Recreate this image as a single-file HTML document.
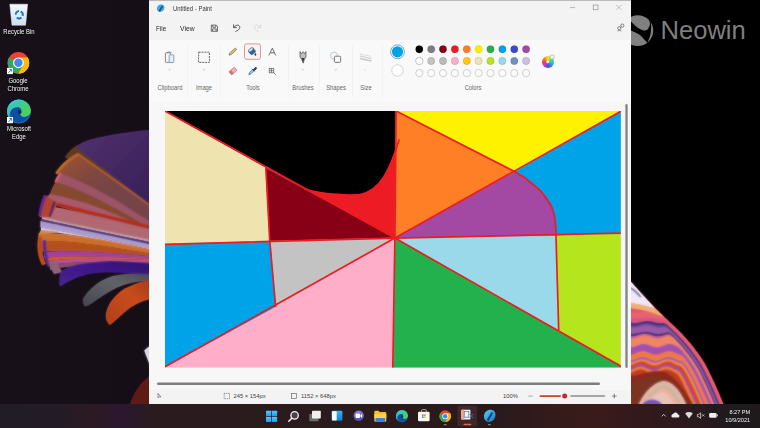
<!DOCTYPE html>
<html lang="en">
<head>
<meta charset="utf-8">
<title>Untitled - Paint</title>
<style>
html,body{margin:0;padding:0;}
body{width:760px;height:428px;overflow:hidden;background:#000;position:relative;font-family:"Liberation Sans",sans-serif;}
#wall{position:absolute;left:0;top:0;width:760px;height:428px;}
.dicon{position:absolute;color:#fff;font-size:6.5px;line-height:8.1px;text-align:center;width:40px;text-shadow:0 0 1px #000,0 1px 1px #000;transform:scaleX(0.91);transform-origin:50% 50%;}
#neowin{position:absolute;left:660.6px;top:15.4px;font-size:25.6px;line-height:30px;color:#7f7f7f;letter-spacing:-0.05px;}
#win{position:absolute;left:149px;top:0;width:482px;height:404px;background:#f3f3f3;overflow:hidden;}
#title{position:absolute;left:23.8px;top:3.5px;font-size:6.4px;line-height:10px;color:#383838;transform:scaleX(0.93);transform-origin:0 50%;white-space:nowrap;}
.menu{position:absolute;top:22.6px;font-size:7.1px;line-height:12px;color:#2a2a2a;transform-origin:0 50%;}
#ribbon{position:absolute;left:0;top:40px;width:482px;height:62px;background:#f9f9f9;border-bottom:1px solid #f4f4f5;}
.glabel{position:absolute;top:43px;font-size:6.3px;line-height:9px;color:#666;text-align:center;transform:translateX(-50%) scaleX(0.92);white-space:nowrap;}
.sep{position:absolute;top:4px;width:1px;height:54px;background:#f3f3f3;}
#work{position:absolute;left:0;top:102px;width:482px;height:289px;background:#f7f7f8;}
#status{position:absolute;left:0;top:390.3px;width:482px;height:14px;background:#f3f3f3;font-size:5.8px;line-height:12px;color:#444;}
#status span{position:absolute;top:0;white-space:nowrap;}
#task{position:absolute;left:0;top:404px;width:760px;height:24px;background:linear-gradient(90deg,#221c26 0%,#231c26 8%,#2b1a22 12%,#2a1730 16%,#2a1b1f 20%,#2a1b1d 35%,#2b1a1c 66%,#3a1b1a 78%,#33191c 84%,#291a1e 92%,#1f1a1d 96%,#1e1a1c 100%);}
#clock{position:absolute;right:9.6px;top:4.9px;font-size:5.9px;line-height:7.9px;color:#f2f2f2;text-align:right;transform:scaleX(0.95);transform-origin:100% 50%;}
svg{position:absolute;left:0;top:0;overflow:visible;}
</style>
</head>
<body>
<svg id="wall" width="760" height="428" viewBox="0 0 760 428">
  <defs>
    <filter id="soft" x="-5%" y="-5%" width="110%" height="110%"><feGaussianBlur stdDeviation="0.8"/></filter>
    <linearGradient id="bgL" x1="0" y1="0" x2="1" y2="0"><stop offset="0" stop-color="#181019"/><stop offset="1" stop-color="#150e17"/></linearGradient>
    <linearGradient id="pPurple" x1="0" y1="0" x2="1" y2="1"><stop offset="0" stop-color="#51316d"/><stop offset="1" stop-color="#372058"/></linearGradient>
    <linearGradient id="pBrown" gradientUnits="userSpaceOnUse" x1="70" y1="155" x2="100" y2="200"><stop offset="0" stop-color="#9a5232"/><stop offset="0.5" stop-color="#80483e"/><stop offset="1" stop-color="#74444a"/></linearGradient>
    <linearGradient id="pGray" x1="0" y1="1" x2="1" y2="0"><stop offset="0" stop-color="#46464e"/><stop offset="0.6" stop-color="#62626a"/><stop offset="1" stop-color="#4e4a58"/></linearGradient>
    <linearGradient id="pOrg" x1="0" y1="1" x2="1" y2="0"><stop offset="0" stop-color="#b0401a"/><stop offset="0.6" stop-color="#c84c1c"/><stop offset="1" stop-color="#a83c18"/></linearGradient>
    <linearGradient id="pVio" x1="0" y1="1" x2="1" y2="0"><stop offset="0" stop-color="#46288a"/><stop offset="0.5" stop-color="#40168c"/><stop offset="1" stop-color="#30126c"/></linearGradient>
    <linearGradient id="rimG" gradientUnits="userSpaceOnUse" x1="630" y1="284" x2="690" y2="350"><stop offset="0" stop-color="#ece4f2"/><stop offset="0.3" stop-color="#e8d0e0"/><stop offset="0.6" stop-color="#5a3a84"/><stop offset="1" stop-color="#342e6c"/></linearGradient>
    <linearGradient id="band2G" gradientUnits="userSpaceOnUse" x1="630" y1="296" x2="690" y2="350"><stop offset="0" stop-color="#f2a452"/><stop offset="0.55" stop-color="#e8804c"/><stop offset="1" stop-color="#3a2e6c"/></linearGradient>
    <linearGradient id="band3G" gradientUnits="userSpaceOnUse" x1="630" y1="303" x2="690" y2="350"><stop offset="0" stop-color="#e2405c"/><stop offset="0.5" stop-color="#8a4898"/><stop offset="1" stop-color="#a058a8"/></linearGradient>
  </defs>
  <rect x="0" y="0" width="150" height="428" fill="url(#bgL)"/>
  <g id="bloomL">
    <path d="M65,157 C69,151 74,147 78,145 L151,197 L151,214 C120,192 90,172 65,157 Z" fill="#5e3a22"/>
    <path d="M55.5,173 C61,164 70,157 78,153 L151,205 L151,222 C118,200 85,183 55.5,173 Z" fill="url(#pBrown)"/>
    <path d="M55.5,173 C61,164 70,157 78,153 L151,205 L151,207 L79,155.5 C72,159 63,166 58,174.5 Z" fill="#b8642a"/>
    <path d="M54.6,182 C56,178 58,175 60,173 C90,184 122,203 151,222 L151,232 C118,210 86,192 54.6,182 Z" fill="#9c5466"/>
    <path d="M54.6,182 C56,178 58,175 60,173 L62,174 C59.5,177 58,180 57,183 Z" fill="#cc5c78"/>
    <path d="M50,194 C52,188 54,184 56,182 C88,192 120,210 151,229 L151,233 C118,214 84,200 50,194 Z" fill="#84492f"/>
    <path d="M45,201 C47,197 49,195 50,194 C84,200 118,214 151,231 L151,234 L57,204 Z" fill="#a85a6c"/>
    <path d="M57,202.6 Q56.0,202.5 151,226 L151,229.6 Q56.0,207.2 57,205.6 Z" fill="#b42a18"/>
    <path d="M44,205.5 Q62.5,207.2 151,229.6 L151,240.4 Q62.5,223.2 44,218 Z" fill="#b06872"/>
    <path d="M42,217 Q63.5,222.7 151,240 L151,242.2 Q63.5,224.2 42,219 Z" fill="#cca8b0"/>
    <path d="M41,219 Q64.0,224.2 151,242.2 L151,244.4 Q64.0,226.1 41,221 Z" fill="#3a1c6c"/>
    <path d="M40.5,221 Q64.2,226.1 151,244.4 L151,248.4 Q64.2,231.3 40.5,227.4 Z" fill="#aa9ace"/>
    <path d="M41,227.4 Q64.0,231.3 151,248.4 L151,249.4 Q64.0,232.5 41,230.4 Z" fill="#d8c8d6"/>
    <path d="M38.6,233.6 Q65.2,230.9 151,249.4 L151,254 Q65.2,238.6 38.6,241.6 Z" fill="#cc6e2a"/>
    <path d="M39,241.6 Q65.0,238.6 151,254 L151,256.2 Q65.0,249.2 39,251.8 Z" fill="#b4501e"/>
    <path d="M44,252.6 Q62.5,248.8 151,256.2 L151,258.8 Q62.5,254.0 44,258 Z" fill="#a040a0"/>
    <path d="M46,258 Q61.5,254.0 151,258.8 L151,260.2 Q61.5,256.5 46,262 Z" fill="#cc5c2c"/>
    <path d="M48,262 Q60.5,256.5 151,260.2 L151,262.6 Q60.5,260.5 48,266 Z" fill="#b8508c"/>
    <path d="M50,266 Q59.5,260.5 151,262.6 L151,264.4 Q59.5,264.8 50,270 Z" fill="#8a4a74"/>
    <path d="M41,230 L39,234 L46,234 L60,232 Z" fill="#c88a5a"/>
    <path d="M39.6,217 L43.6,200 L46.5,195.5 L57.5,203.4 L50.5,217 Z" fill="#b4432e"/>
    <path d="M53.6,201 L55.6,202.2 L50.6,217 L48.8,216.6 Z" fill="#43206e"/>
    <path d="M44,195 C41,202 39,209 38.5,216 L41,216 C42,209 44,202 47,196 Z" fill="#62288e"/>
    <path d="M38.5,236 C36.5,246 37.5,256 42,265 L46,264 C42,256 41,246 42,237 Z" fill="#b84a1c"/>
    <path d="M43,240 C42.5,248 44,258 48,267 L50.5,266 C47,258 46,248 46,240 Z" fill="#54288e"/>
    <path d="M48,262 L54,274 L62,272 L56,262 Z" fill="#8e6474"/>
    <path d="M60,286.5 C59,281 59.5,276 61,271.5 C68,267 75,265 80,264.2 C95,261.5 108,260.8 115,261 C128,261.5 140,262.4 151,263.4 L151,276 C128,272 104,271 88,274 C76,277 67,282 60,286.5 Z" fill="url(#pVio)"/>
    <path d="M84.5,306 C82.5,303 82.8,300 83.6,298 C90,288 100,280 113,276 C126,273.5 138,273.5 151,274.3 L151,280.5 C138,281 127,283 117,287.5 C108,292 99,298 92,303 C89,305 86.5,306.5 84.5,306 Z" fill="url(#pGray)"/>
    <path d="M109.7,325 C106.5,322 105.5,318 106,313.5 C107.5,307 110,302 113.5,298.5 C118,293 123,289 128.5,287 C136,283.5 143,281 151,280 L151,299 C146,300 142.5,301 139.6,302.5 C134,305 129,308 124.7,312 C119,317 114,322 109.7,325 Z" fill="url(#pOrg)"/>
    <path d="M144.3,350.6 L151,345 L151,368 Z" fill="#dcd6e4"/>
    <path d="M130,404 C134,392 141,382 151,375 L151,404 Z" fill="#5e1a18"/>
    <path d="M77,146.5 C82,141 95,138 113,134.7 C126,132.5 138,131 151,130 L151,205 C125,187 100,165 78,149 Z" fill="url(#pPurple)"/>
  </g>
  <g id="bloomR">
    <path d="M630.0,281.0 L631.0,282.0 L632.0,283.1 L633.0,284.2 L634.0,285.3 L635.0,286.4 L636.0,287.5 L637.0,288.6 L638.0,289.7 L639.0,290.8 L640.0,291.9 L641.0,292.9 L642.0,294.0 L643.0,295.1 L644.0,296.2 L645.0,297.3 L646.0,298.3 L647.0,299.4 L648.0,300.5 L649.0,301.6 L650.0,302.6 L651.0,303.7 L652.0,304.7 L653.0,305.8 L654.0,306.8 L655.0,307.9 L656.0,308.9 L657.0,309.9 L658.0,311.0 L659.0,312.0 L660.0,313.0 L661.0,314.0 L662.0,314.9 L663.0,315.9 L664.0,316.8 L665.0,317.7 L666.0,318.6 L667.0,319.6 L668.0,320.5 L669.0,321.5 L670.0,322.4 L671.0,323.3 L672.0,324.3 L673.0,325.2 L674.0,326.2 L675.0,327.1 L676.0,328.1 L677.0,329.1 L678.0,330.0 L679.0,331.0 L680.0,332.0 L681.0,333.0 L682.0,334.1 L683.0,335.2 L684.0,336.3 L685.0,337.4 L686.0,338.5 L687.0,339.6 L688.0,340.8 L689.0,341.9 L690.0,343.1 L691.0,344.3 L692.0,345.6 L693.0,346.8 L694.0,348.1 L695.0,349.5 L696.0,350.8 L697.0,352.1 L698.0,353.4 L699.0,354.8 L700.0,356.2 L701.0,357.7 L702.0,359.2 L703.0,360.8 L704.0,362.4 L705.0,364.1 L706.0,365.9 L707.0,367.8 L708.0,369.8 L709.0,371.8 L710.0,374.0 L711.0,376.0 L712.0,378.1 L713.0,380.2 L714.0,382.3 L715.0,384.5 L716.0,386.7 L717.0,389.0 L718.0,391.3 L719.0,393.6 L720.0,396.0 L721.0,398.4 L722.0,400.8 L723.0,403.3 L724.0,405.0 L630,405 Z" fill="#e4546e"/>
    <path d="M630.0,312.1 L631.0,312.3 L632.0,312.4 L633.0,312.4 L634.0,312.5 L635.0,312.5 L636.0,312.5 L637.0,312.5 L638.0,312.4 L639.0,312.3 L640.0,312.2 L641.0,312.1 L642.0,312.0 L643.0,311.9 L644.0,311.7 L645.0,311.6 L646.0,311.6 L647.0,311.5 L648.0,311.5 L649.0,311.5 L650.0,311.5 L651.0,311.6 L652.0,311.7 L653.0,311.8 L654.0,312.0 L655.0,312.2 L656.0,312.5 L657.0,313.0 L658.0,313.6 L659.0,314.3 L660.0,315.1 L661.0,316.0 L662.0,316.9 L663.0,317.8 L664.0,318.7 L665.0,319.6 L666.0,320.6 L667.0,321.5 L668.0,322.4 L669.0,323.4 L670.0,324.3 L671.0,325.3 L672.0,326.2 L673.0,327.2 L674.0,328.1 L675.0,329.1 L676.0,330.0 L677.0,331.0 L678.0,332.0 L679.0,333.0 L680.0,334.0 L681.0,335.1 L682.0,336.2 L683.0,337.3 L684.0,338.4 L685.0,339.5 L686.0,340.6 L687.0,341.7 L688.0,342.9 L689.0,344.1 L690.0,345.3 L691.0,346.5 L692.0,347.8 L693.0,349.1 L694.0,350.5 L695.0,351.8 L696.0,353.1 L697.0,354.4 L698.0,355.8 L699.0,357.2 L700.0,358.7 L701.0,360.2 L702.0,361.8 L703.0,363.5 L704.0,365.2 L705.0,367.0 L706.0,368.9 L707.0,370.9 L708.0,373.0 L709.0,375.1 L710.0,377.2 L711.0,379.2 L712.0,381.3 L713.0,383.5 L714.0,385.7 L715.0,387.9 L716.0,390.2 L717.0,392.5 L718.0,394.9 L719.0,397.2 L720.0,399.7 L721.0,402.1 L722.0,404.5 L723.0,405.0 L630,405 Z" fill="#e8646e"/>
    <path d="M630.0,318.3 L631.0,318.5 L632.0,318.6 L633.0,318.7 L634.0,318.8 L635.0,318.8 L636.0,318.8 L637.0,318.7 L638.0,318.6 L639.0,318.4 L640.0,318.3 L641.0,318.1 L642.0,317.9 L643.0,317.7 L644.0,317.5 L645.0,317.4 L646.0,317.3 L647.0,317.2 L648.0,317.2 L649.0,317.2 L650.0,317.3 L651.0,317.4 L652.0,317.6 L653.0,317.7 L654.0,317.9 L655.0,318.1 L656.0,318.3 L657.0,318.5 L658.0,318.7 L659.0,318.8 L660.0,319.0 L661.0,319.2 L662.0,319.5 L663.0,320.0 L664.0,320.6 L665.0,321.4 L666.0,322.3 L667.0,323.2 L668.0,324.1 L669.0,325.0 L670.0,326.0 L671.0,326.9 L672.0,327.9 L673.0,328.8 L674.0,329.8 L675.0,330.7 L676.0,331.7 L677.0,332.7 L678.0,333.7 L679.0,334.7 L680.0,335.8 L681.0,336.8 L682.0,337.9 L683.0,339.0 L684.0,340.2 L685.0,341.3 L686.0,342.4 L687.0,343.6 L688.0,344.8 L689.0,346.0 L690.0,347.2 L691.0,348.5 L692.0,349.8 L693.0,351.2 L694.0,352.4 L695.0,353.7 L696.0,355.1 L697.0,356.5 L698.0,357.9 L699.0,359.4 L700.0,360.9 L701.0,362.5 L702.0,364.2 L703.0,365.9 L704.0,367.7 L705.0,369.6 L706.0,371.6 L707.0,373.7 L708.0,375.8 L709.0,377.9 L710.0,379.9 L711.0,382.0 L712.0,384.2 L713.0,386.4 L714.0,388.6 L715.0,390.9 L716.0,393.2 L717.0,395.6 L718.0,398.0 L719.0,400.4 L720.0,402.8 L721.0,405.0 L630,405 Z" fill="#dc5486"/>
    <path d="M630.0,322.5 L631.0,322.7 L632.0,322.8 L633.0,322.9 L634.0,323.0 L635.0,323.0 L636.0,322.9 L637.0,322.8 L638.0,322.7 L639.0,322.4 L640.0,322.2 L641.0,322.0 L642.0,321.7 L643.0,321.5 L644.0,321.3 L645.0,321.2 L646.0,321.1 L647.0,321.0 L648.0,321.0 L649.0,321.1 L650.0,321.2 L651.0,321.3 L652.0,321.6 L653.0,321.8 L654.0,322.0 L655.0,322.3 L656.0,322.5 L657.0,322.7 L658.0,322.8 L659.0,323.0 L660.0,323.0 L661.0,323.0 L662.0,323.0 L663.0,323.0 L664.0,323.1 L665.0,323.4 L666.0,323.9 L667.0,324.7 L668.0,325.5 L669.0,326.4 L670.0,327.4 L671.0,328.3 L672.0,329.2 L673.0,330.2 L674.0,331.2 L675.0,332.1 L676.0,333.1 L677.0,334.1 L678.0,335.1 L679.0,336.1 L680.0,337.2 L681.0,338.3 L682.0,339.4 L683.0,340.5 L684.0,341.7 L685.0,342.8 L686.0,343.9 L687.0,345.1 L688.0,346.3 L689.0,347.6 L690.0,348.8 L691.0,350.1 L692.0,351.5 L693.0,352.8 L694.0,354.1 L695.0,355.4 L696.0,356.8 L697.0,358.2 L698.0,359.7 L699.0,361.2 L700.0,362.8 L701.0,364.4 L702.0,366.1 L703.0,367.9 L704.0,369.8 L705.0,371.8 L706.0,373.9 L707.0,376.1 L708.0,378.1 L709.0,380.1 L710.0,382.3 L711.0,384.4 L712.0,386.6 L713.0,388.8 L714.0,391.1 L715.0,393.4 L716.0,395.8 L717.0,398.2 L718.0,400.6 L719.0,403.0 L720.0,405.0 L630,405 Z" fill="#3c3272"/>
    <path d="M630.0,325.1 L631.0,325.2 L632.0,325.4 L633.0,325.5 L634.0,325.5 L635.0,325.5 L636.0,325.4 L637.0,325.3 L638.0,325.1 L639.0,324.9 L640.0,324.6 L641.0,324.4 L642.0,324.1 L643.0,323.9 L644.0,323.8 L645.0,323.6 L646.0,323.5 L647.0,323.5 L648.0,323.5 L649.0,323.6 L650.0,323.7 L651.0,323.9 L652.0,324.1 L653.0,324.4 L654.0,324.6 L655.0,324.9 L656.0,325.1 L657.0,325.2 L658.0,325.4 L659.0,325.5 L660.0,325.5 L661.0,325.5 L662.0,325.5 L663.0,325.4 L664.0,325.4 L665.0,325.6 L666.0,326.0 L667.0,326.7 L668.0,327.5 L669.0,328.4 L670.0,329.3 L671.0,330.2 L672.0,331.2 L673.0,332.2 L674.0,333.1 L675.0,334.1 L676.0,335.1 L677.0,336.1 L678.0,337.1 L679.0,338.2 L680.0,339.3 L681.0,340.4 L682.0,341.5 L683.0,342.6 L684.0,343.8 L685.0,344.9 L686.0,346.1 L687.0,347.3 L688.0,348.6 L689.0,349.8 L690.0,351.1 L691.0,352.5 L692.0,353.8 L693.0,355.1 L694.0,356.4 L695.0,357.8 L696.0,359.2 L697.0,360.7 L698.0,362.2 L699.0,363.8 L700.0,365.5 L701.0,367.2 L702.0,369.0 L703.0,370.9 L704.0,373.0 L705.0,375.1 L706.0,377.2 L707.0,379.2 L708.0,381.3 L709.0,383.4 L710.0,385.6 L711.0,387.8 L712.0,390.0 L713.0,392.3 L714.0,394.6 L715.0,397.0 L716.0,399.4 L717.0,401.8 L718.0,404.3 L719.0,405.0 L630,405 Z" fill="#6e4c94"/>
    <path d="M630.0,327.4 L631.0,327.5 L632.0,327.7 L633.0,327.7 L634.0,327.7 L635.0,327.6 L636.0,327.4 L637.0,327.2 L638.0,327.0 L639.0,326.7 L640.0,326.4 L641.0,326.1 L642.0,325.9 L643.0,325.6 L644.0,325.5 L645.0,325.3 L646.0,325.3 L647.0,325.3 L648.0,325.4 L649.0,325.6 L650.0,325.8 L651.0,326.0 L652.0,326.3 L653.0,326.6 L654.0,326.9 L655.0,327.1 L656.0,327.4 L657.0,327.5 L658.0,327.7 L659.0,327.7 L660.0,327.7 L661.0,327.6 L662.0,327.5 L663.0,327.3 L664.0,327.2 L665.0,327.1 L666.0,327.4 L667.0,327.9 L668.0,328.6 L669.0,329.5 L670.0,330.4 L671.0,331.3 L672.0,332.3 L673.0,333.3 L674.0,334.2 L675.0,335.2 L676.0,336.2 L677.0,337.2 L678.0,338.3 L679.0,339.4 L680.0,340.5 L681.0,341.6 L682.0,342.7 L683.0,343.8 L684.0,345.0 L685.0,346.2 L686.0,347.4 L687.0,348.6 L688.0,349.8 L689.0,351.1 L690.0,352.5 L691.0,353.8 L692.0,355.1 L693.0,356.4 L694.0,357.8 L695.0,359.2 L696.0,360.6 L697.0,362.2 L698.0,363.7 L699.0,365.4 L700.0,367.1 L701.0,368.9 L702.0,370.7 L703.0,372.7 L704.0,374.8 L705.0,377.0 L706.0,379.0 L707.0,381.1 L708.0,383.2 L709.0,385.3 L710.0,387.5 L711.0,389.7 L712.0,392.0 L713.0,394.3 L714.0,396.7 L715.0,399.1 L716.0,401.5 L717.0,403.9 L718.0,405.0 L630,405 Z" fill="#9c58a8"/>
    <path d="M630.0,333.8 L631.0,333.9 L632.0,334.0 L633.0,334.0 L634.0,333.9 L635.0,333.8 L636.0,333.6 L637.0,333.4 L638.0,333.2 L639.0,333.0 L640.0,332.7 L641.0,332.5 L642.0,332.3 L643.0,332.2 L644.0,332.1 L645.0,332.0 L646.0,332.0 L647.0,332.1 L648.0,332.2 L649.0,332.4 L650.0,332.6 L651.0,332.8 L652.0,333.0 L653.0,333.3 L654.0,333.5 L655.0,333.7 L656.0,333.8 L657.0,333.9 L658.0,334.0 L659.0,334.0 L660.0,333.9 L661.0,333.8 L662.0,333.6 L663.0,333.4 L664.0,333.2 L665.0,333.0 L666.0,332.8 L667.0,332.6 L668.0,332.6 L669.0,332.7 L670.0,333.1 L671.0,333.7 L672.0,334.4 L673.0,335.3 L674.0,336.2 L675.0,337.2 L676.0,338.2 L677.0,339.3 L678.0,340.4 L679.0,341.5 L680.0,342.6 L681.0,343.7 L682.0,344.8 L683.0,346.0 L684.0,347.2 L685.0,348.4 L686.0,349.6 L687.0,350.8 L688.0,352.1 L689.0,353.5 L690.0,354.8 L691.0,356.1 L692.0,357.4 L693.0,358.8 L694.0,360.2 L695.0,361.7 L696.0,363.2 L697.0,364.8 L698.0,366.4 L699.0,368.2 L700.0,370.0 L701.0,371.9 L702.0,373.9 L703.0,376.0 L704.0,378.1 L705.0,380.1 L706.0,382.2 L707.0,384.3 L708.0,386.5 L709.0,388.7 L710.0,390.9 L711.0,393.2 L712.0,395.6 L713.0,397.9 L714.0,400.3 L715.0,402.7 L716.0,405.0 L630,405 Z" fill="#3a2e6c"/>
    <path d="M630.0,336.2 L631.0,336.3 L632.0,336.3 L633.0,336.3 L634.0,336.1 L635.0,336.0 L636.0,335.7 L637.0,335.4 L638.0,335.1 L639.0,334.8 L640.0,334.5 L641.0,334.2 L642.0,334.0 L643.0,333.8 L644.0,333.7 L645.0,333.7 L646.0,333.7 L647.0,333.9 L648.0,334.0 L649.0,334.3 L650.0,334.6 L651.0,334.9 L652.0,335.2 L653.0,335.5 L654.0,335.8 L655.0,336.0 L656.0,336.2 L657.0,336.3 L658.0,336.3 L659.0,336.3 L660.0,336.1 L661.0,336.0 L662.0,335.7 L663.0,335.4 L664.0,335.1 L665.0,334.8 L666.0,334.6 L667.0,334.3 L668.0,334.2 L669.0,334.3 L670.0,334.6 L671.0,335.1 L672.0,335.9 L673.0,336.7 L674.0,337.7 L675.0,338.6 L676.0,339.7 L677.0,340.8 L678.0,341.9 L679.0,343.0 L680.0,344.1 L681.0,345.2 L682.0,346.4 L683.0,347.5 L684.0,348.7 L685.0,349.9 L686.0,351.2 L687.0,352.5 L688.0,353.8 L689.0,355.1 L690.0,356.4 L691.0,357.7 L692.0,359.1 L693.0,360.5 L694.0,362.0 L695.0,363.5 L696.0,365.1 L697.0,366.7 L698.0,368.4 L699.0,370.2 L700.0,372.1 L701.0,374.1 L702.0,376.2 L703.0,378.3 L704.0,380.4 L705.0,382.4 L706.0,384.6 L707.0,386.7 L708.0,388.9 L709.0,391.2 L710.0,393.4 L711.0,395.8 L712.0,398.1 L713.0,400.5 L714.0,402.9 L715.0,405.0 L630,405 Z" fill="#c462a0"/>
    <path d="M630.0,338.4 L631.0,338.5 L632.0,338.5 L633.0,338.4 L634.0,338.2 L635.0,338.0 L636.0,337.7 L637.0,337.4 L638.0,337.0 L639.0,336.7 L640.0,336.3 L641.0,336.0 L642.0,335.8 L643.0,335.6 L644.0,335.5 L645.0,335.5 L646.0,335.6 L647.0,335.8 L648.0,336.0 L649.0,336.3 L650.0,336.6 L651.0,337.0 L652.0,337.3 L653.0,337.7 L654.0,338.0 L655.0,338.2 L656.0,338.4 L657.0,338.5 L658.0,338.5 L659.0,338.4 L660.0,338.2 L661.0,338.0 L662.0,337.7 L663.0,337.4 L664.0,337.0 L665.0,336.7 L666.0,336.3 L667.0,336.1 L668.0,335.9 L669.0,335.8 L670.0,336.0 L671.0,336.4 L672.0,337.0 L673.0,337.7 L674.0,338.6 L675.0,339.6 L676.0,340.6 L677.0,341.7 L678.0,342.8 L679.0,343.9 L680.0,345.0 L681.0,346.1 L682.0,347.3 L683.0,348.5 L684.0,349.7 L685.0,350.9 L686.0,352.2 L687.0,353.5 L688.0,354.8 L689.0,356.1 L690.0,357.4 L691.0,358.7 L692.0,360.1 L693.0,361.6 L694.0,363.1 L695.0,364.6 L696.0,366.2 L697.0,367.9 L698.0,369.6 L699.0,371.5 L700.0,373.4 L701.0,375.5 L702.0,377.7 L703.0,379.7 L704.0,381.7 L705.0,383.8 L706.0,386.0 L707.0,388.2 L708.0,390.4 L709.0,392.6 L710.0,395.0 L711.0,397.3 L712.0,399.7 L713.0,402.1 L714.0,404.5 L715.0,405.0 L630,405 Z" fill="#f08660"/>
    <path d="M630.0,347.2 L631.0,347.2 L632.0,347.1 L633.0,347.0 L634.0,346.7 L635.0,346.4 L636.0,346.1 L637.0,345.7 L638.0,345.3 L639.0,344.9 L640.0,344.6 L641.0,344.3 L642.0,344.1 L643.0,344.0 L644.0,344.0 L645.0,344.1 L646.0,344.2 L647.0,344.5 L648.0,344.8 L649.0,345.1 L650.0,345.5 L651.0,345.9 L652.0,346.3 L653.0,346.6 L654.0,346.9 L655.0,347.1 L656.0,347.2 L657.0,347.2 L658.0,347.1 L659.0,347.0 L660.0,346.7 L661.0,346.4 L662.0,346.1 L663.0,345.7 L664.0,345.3 L665.0,344.9 L666.0,344.6 L667.0,344.3 L668.0,344.1 L669.0,344.0 L670.0,344.0 L671.0,344.1 L672.0,344.3 L673.0,344.5 L674.0,344.9 L675.0,345.3 L676.0,345.8 L677.0,346.3 L678.0,346.9 L679.0,347.6 L680.0,348.4 L681.0,349.4 L682.0,350.5 L683.0,351.6 L684.0,352.9 L685.0,354.2 L686.0,355.5 L687.0,356.8 L688.0,358.1 L689.0,359.4 L690.0,360.8 L691.0,362.2 L692.0,363.7 L693.0,365.2 L694.0,366.8 L695.0,368.4 L696.0,370.2 L697.0,372.0 L698.0,373.9 L699.0,375.9 L700.0,378.1 L701.0,380.2 L702.0,382.2 L703.0,384.3 L704.0,386.4 L705.0,388.6 L706.0,390.8 L707.0,393.1 L708.0,395.4 L709.0,397.7 L710.0,400.1 L711.0,402.5 L712.0,404.9 L713.0,405.0 L630,405 Z" fill="#a250b2"/>
    <path d="M630.0,354.8 L631.0,354.7 L632.0,354.6 L633.0,354.3 L634.0,354.0 L635.0,353.6 L636.0,353.2 L637.0,352.7 L638.0,352.3 L639.0,351.9 L640.0,351.6 L641.0,351.4 L642.0,351.2 L643.0,351.2 L644.0,351.3 L645.0,351.4 L646.0,351.7 L647.0,352.0 L648.0,352.4 L649.0,352.8 L650.0,353.3 L651.0,353.7 L652.0,354.1 L653.0,354.4 L654.0,354.6 L655.0,354.8 L656.0,354.8 L657.0,354.7 L658.0,354.6 L659.0,354.3 L660.0,354.0 L661.0,353.6 L662.0,353.2 L663.0,352.7 L664.0,352.3 L665.0,351.9 L666.0,351.6 L667.0,351.4 L668.0,351.2 L669.0,351.2 L670.0,351.3 L671.0,351.4 L672.0,351.7 L673.0,352.0 L674.0,352.4 L675.0,352.8 L676.0,353.3 L677.0,353.7 L678.0,354.1 L679.0,354.5 L680.0,354.8 L681.0,355.2 L682.0,355.7 L683.0,356.5 L684.0,357.6 L685.0,358.8 L686.0,360.1 L687.0,361.4 L688.0,362.8 L689.0,364.2 L690.0,365.7 L691.0,367.2 L692.0,368.9 L693.0,370.5 L694.0,372.3 L695.0,374.2 L696.0,376.2 L697.0,378.3 L698.0,380.4 L699.0,382.4 L700.0,384.5 L701.0,386.6 L702.0,388.8 L703.0,391.0 L704.0,393.2 L705.0,395.5 L706.0,397.8 L707.0,400.2 L708.0,402.6 L709.0,405.0 L710.0,405.0 L630,405 Z" fill="#f07a40"/>
    <path d="M630.0,360.8 L631.0,360.7 L632.0,360.5 L633.0,360.2 L634.0,359.8 L635.0,359.4 L636.0,359.0 L637.0,358.6 L638.0,358.2 L639.0,357.8 L640.0,357.5 L641.0,357.3 L642.0,357.2 L643.0,357.2 L644.0,357.3 L645.0,357.5 L646.0,357.8 L647.0,358.2 L648.0,358.6 L649.0,359.0 L650.0,359.4 L651.0,359.8 L652.0,360.2 L653.0,360.5 L654.0,360.7 L655.0,360.8 L656.0,360.8 L657.0,360.7 L658.0,360.5 L659.0,360.2 L660.0,359.8 L661.0,359.4 L662.0,359.0 L663.0,358.6 L664.0,358.2 L665.0,357.8 L666.0,357.5 L667.0,357.3 L668.0,357.2 L669.0,357.2 L670.0,357.3 L671.0,357.5 L672.0,357.8 L673.0,358.2 L674.0,358.6 L675.0,359.0 L676.0,359.5 L677.0,359.9 L678.0,360.2 L679.0,360.5 L680.0,360.8 L681.0,361.1 L682.0,361.5 L683.0,362.2 L684.0,363.2 L685.0,364.5 L686.0,365.9 L687.0,367.3 L688.0,368.9 L689.0,370.5 L690.0,372.2 L691.0,373.9 L692.0,375.8 L693.0,377.8 L694.0,379.9 L695.0,382.0 L696.0,384.0 L697.0,386.1 L698.0,388.2 L699.0,390.4 L700.0,392.6 L701.0,394.8 L702.0,397.1 L703.0,399.4 L704.0,401.8 L705.0,404.2 L706.0,405.0 L630,405 Z" fill="#a452bc"/>
    <path d="M630.0,362.8 L631.0,362.6 L632.0,362.4 L633.0,362.0 L634.0,361.7 L635.0,361.2 L636.0,360.8 L637.0,360.4 L638.0,360.0 L639.0,359.7 L640.0,359.4 L641.0,359.3 L642.0,359.2 L643.0,359.2 L644.0,359.4 L645.0,359.6 L646.0,360.0 L647.0,360.3 L648.0,360.8 L649.0,361.2 L650.0,361.6 L651.0,362.0 L652.0,362.3 L653.0,362.6 L654.0,362.7 L655.0,362.8 L656.0,362.8 L657.0,362.6 L658.0,362.4 L659.0,362.0 L660.0,361.7 L661.0,361.2 L662.0,360.8 L663.0,360.4 L664.0,360.0 L665.0,359.7 L666.0,359.4 L667.0,359.3 L668.0,359.2 L669.0,359.2 L670.0,359.4 L671.0,359.6 L672.0,360.0 L673.0,360.3 L674.0,360.8 L675.0,361.2 L676.0,361.6 L677.0,362.0 L678.0,362.4 L679.0,362.7 L680.0,362.9 L681.0,363.3 L682.0,363.8 L683.0,364.7 L684.0,365.9 L685.0,367.2 L686.0,368.7 L687.0,370.3 L688.0,371.9 L689.0,373.6 L690.0,375.4 L691.0,377.3 L692.0,379.4 L693.0,381.5 L694.0,383.6 L695.0,385.6 L696.0,387.7 L697.0,389.9 L698.0,392.0 L699.0,394.3 L700.0,396.5 L701.0,398.8 L702.0,401.2 L703.0,403.6 L704.0,405.0 L630,405 Z" fill="#ee8a3a"/>
    <path d="M630.0,365.4 L631.0,365.2 L632.0,364.9 L633.0,364.5 L634.0,364.0 L635.0,363.6 L636.0,363.1 L637.0,362.6 L638.0,362.2 L639.0,361.9 L640.0,361.7 L641.0,361.5 L642.0,361.5 L643.0,361.6 L644.0,361.8 L645.0,362.1 L646.0,362.5 L647.0,363.0 L648.0,363.4 L649.0,363.9 L650.0,364.4 L651.0,364.8 L652.0,365.1 L653.0,365.3 L654.0,365.5 L655.0,365.5 L656.0,365.4 L657.0,365.2 L658.0,364.9 L659.0,364.5 L660.0,364.0 L661.0,363.6 L662.0,363.1 L663.0,362.6 L664.0,362.2 L665.0,361.9 L666.0,361.7 L667.0,361.5 L668.0,361.5 L669.0,361.6 L670.0,361.8 L671.0,362.1 L672.0,362.5 L673.0,363.0 L674.0,363.4 L675.0,363.9 L676.0,364.4 L677.0,364.8 L678.0,365.2 L679.0,365.5 L680.0,365.9 L681.0,366.5 L682.0,367.4 L683.0,368.6 L684.0,370.1 L685.0,371.6 L686.0,373.2 L687.0,375.0 L688.0,376.8 L689.0,378.7 L690.0,380.8 L691.0,382.9 L692.0,385.0 L693.0,387.0 L694.0,389.1 L695.0,391.3 L696.0,393.4 L697.0,395.7 L698.0,397.9 L699.0,400.3 L700.0,402.6 L701.0,405.0 L630,405 Z" fill="#d2442a"/>
    <path d="M630.0,368.3 L631.0,368.1 L632.0,367.7 L633.0,367.3 L634.0,366.8 L635.0,366.4 L636.0,365.9 L637.0,365.5 L638.0,365.1 L639.0,364.8 L640.0,364.6 L641.0,364.5 L642.0,364.5 L643.0,364.7 L644.0,364.9 L645.0,365.3 L646.0,365.7 L647.0,366.2 L648.0,366.6 L649.0,367.1 L650.0,367.5 L651.0,367.9 L652.0,368.2 L653.0,368.4 L654.0,368.5 L655.0,368.5 L656.0,368.3 L657.0,368.1 L658.0,367.7 L659.0,367.3 L660.0,366.8 L661.0,366.4 L662.0,365.9 L663.0,365.5 L664.0,365.1 L665.0,364.8 L666.0,364.6 L667.0,364.5 L668.0,364.5 L669.0,364.7 L670.0,364.9 L671.0,365.3 L672.0,365.7 L673.0,366.2 L674.0,366.7 L675.0,367.1 L676.0,367.6 L677.0,368.1 L678.0,368.6 L679.0,369.1 L680.0,370.0 L681.0,371.1 L682.0,372.5 L683.0,374.1 L684.0,375.8 L685.0,377.5 L686.0,379.4 L687.0,381.4 L688.0,383.6 L689.0,385.7 L690.0,387.7 L691.0,389.8 L692.0,391.9 L693.0,394.1 L694.0,396.3 L695.0,398.6 L696.0,400.9 L697.0,403.2 L698.0,405.0 L630,405 Z" fill="#9a4ab0"/>
    <path d="M630.0,370.2 L631.0,369.9 L632.0,369.6 L633.0,369.1 L634.0,368.6 L635.0,368.2 L636.0,367.7 L637.0,367.3 L638.0,366.9 L639.0,366.7 L640.0,366.5 L641.0,366.5 L642.0,366.6 L643.0,366.8 L644.0,367.1 L645.0,367.4 L646.0,367.9 L647.0,368.4 L648.0,368.8 L649.0,369.3 L650.0,369.7 L651.0,370.1 L652.0,370.3 L653.0,370.5 L654.0,370.5 L655.0,370.4 L656.0,370.2 L657.0,369.9 L658.0,369.6 L659.0,369.1 L660.0,368.6 L661.0,368.2 L662.0,367.7 L663.0,367.3 L664.0,366.9 L665.0,366.7 L666.0,366.5 L667.0,366.5 L668.0,366.6 L669.0,366.8 L670.0,367.1 L671.0,367.4 L672.0,367.9 L673.0,368.4 L674.0,368.9 L675.0,369.4 L676.0,369.8 L677.0,370.3 L678.0,370.8 L679.0,371.5 L680.0,372.6 L681.0,374.0 L682.0,375.5 L683.0,377.2 L684.0,379.1 L685.0,381.0 L686.0,383.1 L687.0,385.2 L688.0,387.3 L689.0,389.3 L690.0,391.4 L691.0,393.6 L692.0,395.8 L693.0,398.0 L694.0,400.3 L695.0,402.6 L696.0,405.0 L697.0,405.0 L630,405 Z" fill="#ee7a34"/>
    <path d="M630.0,373.1 L631.0,372.8 L632.0,372.4 L633.0,371.9 L634.0,371.4 L635.0,371.0 L636.0,370.5 L637.0,370.1 L638.0,369.8 L639.0,369.6 L640.0,369.5 L641.0,369.5 L642.0,369.6 L643.0,369.9 L644.0,370.2 L645.0,370.6 L646.0,371.1 L647.0,371.6 L648.0,372.0 L649.0,372.5 L650.0,372.9 L651.0,373.2 L652.0,373.4 L653.0,373.5 L654.0,373.5 L655.0,373.4 L656.0,373.1 L657.0,372.8 L658.0,372.4 L659.0,371.9 L660.0,371.4 L661.0,371.0 L662.0,370.5 L663.0,370.1 L664.0,369.8 L665.0,369.6 L666.0,369.5 L667.0,369.5 L668.0,369.6 L669.0,369.9 L670.0,370.2 L671.0,370.6 L672.0,371.1 L673.0,371.6 L674.0,372.1 L675.0,372.7 L676.0,373.3 L677.0,374.1 L678.0,375.1 L679.0,376.5 L680.0,378.1 L681.0,379.8 L682.0,381.7 L683.0,383.7 L684.0,385.9 L685.0,388.0 L686.0,390.0 L687.0,392.1 L688.0,394.2 L689.0,396.4 L690.0,398.6 L691.0,400.9 L692.0,403.2 L693.0,405.0 L630,405 Z" fill="#c23a22"/>
    <path d="M630,281 L631,282 C639,291 647,300 655,308.6 C647,306 639,304 630,303 Z" fill="#eee8f4"/>
    <path d="M631,287.2 C635,289.4 638,292.6 641.4,296.6 L640.2,297.4 C637,293.8 634,291 631,289.2 Z" fill="#6a5a98"/>
    <path d="M630,303 C639,304 647,306 655,308.6 C658,311.6 661,314.4 664,317 C653,312 641,309 630,308 Z" fill="#f2b070"/>
    <path d="M630,376 C640,376 650,369 662,371 C674,374 686,392 693.5,405 L630,405 Z" fill="#8a2c1c"/>
    <path d="M630,384 C640,382 650,375 662,377.5 C672,380 682,394 688.5,405 L630,405 Z" fill="#7c3424"/>
    <path d="M638.5,405 C642,396 652,382 664,381 C674,381.5 682,394 686.5,405 Z" fill="#e2b6a6"/>
    <path d="M641.5,405 C645,398 654,386 664,385 C672,385.5 678,396 682,405 Z" fill="#cbb8a2"/>
    <path d="M643.5,405 C647,399 655,389 663.5,388.4 C670,389 675,398 678,405 Z" fill="#eeb0a0"/>
    <path d="M646,405 C649,400 656,392.5 662.6,392 C668,392.5 671.5,399 674,405 Z" fill="#e6c4b6"/>
    <path d="M641.8,405 C644,401.5 648,399.6 652,399.6 C657,399.6 660.6,402 662.6,405 Z" fill="#7852c2"/>
  </g>
  <use href="#bloomL" filter="url(#soft)" opacity="0.65"/>
  <use href="#bloomR" filter="url(#soft)" opacity="0.65"/>
</svg>

<svg id="dicons" width="760" height="428" viewBox="0 0 760 428">
  <defs>
    <linearGradient id="binG" x1="0" y1="0" x2="0" y2="1"><stop offset="0" stop-color="#f4f8fb"/><stop offset="1" stop-color="#cfe0ee"/></linearGradient>
    <linearGradient id="edgeG" x1="0" y1="0" x2="1" y2="1"><stop offset="0" stop-color="#35c1f1"/><stop offset="0.55" stop-color="#1b7fd6"/><stop offset="1" stop-color="#0c54b0"/></linearGradient>
    <linearGradient id="edgeG2" x1="0" y1="0" x2="1" y2="0.6"><stop offset="0" stop-color="#2fc2df"/><stop offset="1" stop-color="#4fd34a"/></linearGradient>
  </defs>
  <!-- recycle bin -->
  <path d="M9.8,4.2 L27.6,4.2 L25.6,25.2 L12,25.2 Z" fill="url(#binG)" stroke="#e9eef3" stroke-width="0.5"/>
  <g fill="none" stroke="#1f78d0" stroke-width="2.1">
    <path d="M15.8,14.6 a3.4,3.4 0 0 1 3.2,-3.6"/>
    <path d="M20.6,11.4 a3.4,3.4 0 0 1 2,4.4"/>
    <path d="M21.4,17.6 a3.4,3.4 0 0 1 -4.6,0"/>
  </g>
  <!-- chrome -->
  <g>
    <circle cx="18.4" cy="62.8" r="10.8" fill="#ea4335"/>
    <path d="M18.4,62.8 L9.05,57.4 A10.8,10.8 0 0 0 18.4,73.6 L23.1,65.5 Z" fill="#34a853"/>
    <path d="M18.4,62.8 L27.75,57.4 A10.8,10.8 0 0 1 18.4,73.6 L23.1,65.5 Z" fill="#fbbc05"/>
    <path d="M18.4,57.4 L27.75,57.4 A10.8,10.8 0 0 1 18.4,73.6 L23.1,65.5 Z" fill="#fbbc05"/>
    <circle cx="18.4" cy="62.8" r="5.4" fill="#fff"/>
    <circle cx="18.4" cy="62.8" r="4.2" fill="#4285f4"/>
  </g>
  <!-- edge -->
  <g>
    <circle cx="19" cy="111.6" r="12" fill="url(#edgeG)"/>
    <path d="M7.2,109.5 A12,12 0 0 1 30.9,110 C31,114 28,117.5 23.5,117 C20,116.5 19.5,113 21,111 C22,109 20,107.2 17.5,107.2 C12,107.4 8,112 9.5,118.5 A12,12 0 0 1 7.2,109.5 Z" fill="url(#edgeG2)"/>
    <path d="M7.2,109.5 A12,12 0 0 1 24,100.8 C16,100 9,104 7.2,109.5 Z" fill="#3cc6ee"/>
    <path d="M17.5,107.2 C20,107.2 22,109 21,111 C19.5,113 20,116.5 23.5,117 C26,117.2 28.2,116.2 29.6,114.6 C27,120 22,123 17,122.5 C11,121 8.5,114 11,110.5 C12.5,108.3 15,107.2 17.5,107.2 Z" fill="#0f4fa3"/>
    <circle cx="19.6" cy="112" r="2" fill="#0c2a5c"/>
  </g>
  <!-- shortcut arrows -->
  <g>
    <rect x="7" y="67.9" width="6" height="6.2" fill="#fff"/>
    <path d="M8.4,72.8 L11.4,69.6 M9.4,69.4 L11.6,69.4 L11.6,71.6" stroke="#1f6fd0" stroke-width="0.9" fill="none"/>
    <rect x="7" y="117" width="6" height="6.2" fill="#fff"/>
    <path d="M8.4,121.9 L11.4,118.7 M9.4,118.5 L11.6,118.5 L11.6,120.7" stroke="#1f6fd0" stroke-width="0.9" fill="none"/>
  </g>
  <!-- neowin logo -->
  <g>
    <circle cx="637.8" cy="30.6" r="15.4" fill="#808080"/>
    <path d="M628.4,18.9 C628.7,19.2 629.2,19.7 630.3,20.8 C631.4,21.9 633.6,24.3 635.0,25.5 C636.4,26.8 637.3,27.5 638.7,28.3 C640.1,29.1 641.9,30.2 643.4,30.4 C644.8,30.6 646.4,30.2 647.4,29.4 C648.4,28.7 649.1,26.9 649.5,25.9 C650.0,24.8 650.0,24.2 649.9,23.1 C649.8,22.0 649.4,20.4 649.0,19.3 C648.6,18.3 647.6,17.2 647.4,16.7 L648.3,16.2 C648.7,17.2 650.3,20.1 650.7,22.1 C651.2,24.2 651.2,26.5 651.1,28.7 C651.0,30.9 650.7,33.4 650.3,35.2 C649.9,37.1 649.1,38.6 648.6,39.9 C648.1,41.2 647.6,42.4 647.4,42.9 L645.0,40.3 C644.5,39.7 642.9,37.8 641.8,36.7 C640.7,35.7 639.6,34.8 638.5,34.0 C637.4,33.3 636.3,32.9 635.0,32.2 C633.6,31.6 631.4,30.6 630.3,30.2 C629.2,29.8 628.7,29.7 628.4,29.6 Z" fill="#000"/>
  </g>
</svg>
<div class="dicon" style="left:-1.5px;top:27.8px">Recycle Bin</div>
<div class="dicon" style="left:-1.6px;top:76.7px">Google<br>Chrome</div>
<div class="dicon" style="left:-1.3px;top:125px">Microsoft<br>Edge</div>
<div id="neowin">Neowin</div>

<div id="win">
  <div style="position:absolute;left:0;top:0;width:482px;height:1px;background:#b9b9b9"></div>
  <div id="title">Untitled - Paint</div>
  <div class="menu" style="left:6.9px;transform:scaleX(0.9)">File</div>
  <div class="menu" style="left:31.3px;transform:scaleX(0.96)">View</div>
  <div id="ribbon">
    <div class="sep" style="left:38px"></div>
    <div class="sep" style="left:71px"></div>
    <div class="sep" style="left:139px"></div>
    <div class="sep" style="left:170px"></div>
    <div class="sep" style="left:203px"></div>
    <div class="sep" style="left:232.5px"></div>
    <div class="glabel" style="left:21px">Clipboard</div>
    <div class="glabel" style="left:55px">Image</div>
    <div class="glabel" style="left:104px">Tools</div>
    <div class="glabel" style="left:154px">Brushes</div>
    <div class="glabel" style="left:186.5px">Shapes</div>
    <div class="glabel" style="left:216.5px">Size</div>
    <div class="glabel" style="left:323.5px">Colors</div>
  </div>
  <div id="wheel" style="position:absolute;left:392.8px;top:55.8px;width:11.8px;height:11.8px;border-radius:50%;background:conic-gradient(#f4e23a,#8ad83a,#2ad0b8,#2a90e8,#5a4ae8,#c83ad0,#e83a50,#f08a2a,#f4e23a)"></div>
  <div id="work"></div>
  <div id="status">
    <span style="left:84.5px">245 × 154px</span>
    <span style="left:152px">1152 × 648px</span>
    <span style="left:354px">100%</span>
  </div>
</div>
<svg id="ui" width="760" height="428" viewBox="0 0 760 428">
  <!-- canvas -->
  <clipPath id="cvclip"><rect x="165" y="111" width="455.8" height="256.6"/></clipPath>
  <g id="canvas" clip-path="url(#cvclip)">
    <rect x="165" y="111" width="456.3" height="257" fill="#fff"/>
    <path d="M165,111 L265.9,168.2 L269.8,241.3 L165,244.4 Z" fill="#efe4b0" stroke="#efe4b0" stroke-width="0.7"/>
    <path d="M165,111 L396.1,111 L396.4,140 L399,140 C390,170 380,191 360,194.5 C345,196 320,194 305,189 Z" fill="#000" stroke="#000" stroke-width="0.7"/>
    <path d="M305,189 C320,194 345,196 360,194.5 C380,191 390,170 399,140 L396,140 L394.9,238.1 Z" fill="#ed1c24" stroke="#ed1c24" stroke-width="0.7"/>
    <path d="M265.9,168.2 L394.9,238.1 L269.8,241.3 Z" fill="#880015" stroke="#880015" stroke-width="0.7"/>
    <path d="M396.1,111 L515,171.8 L394.9,238.1 Z" fill="#ff7f27" stroke="#ff7f27" stroke-width="0.7"/>
    <path d="M396.1,111 L621.3,111 L515,171.8 Z" fill="#fff200" stroke="#fff200" stroke-width="0.7"/>
    <path d="M621.3,111 L621.3,233.1 L556,236 C556,219 553,207 548.3,201.5 C544,194 538,188 532.5,184 C527,179 521,175 515,171.8 Z" fill="#00a2e8" stroke="#00a2e8" stroke-width="0.7"/>
    <path d="M394.9,238.1 L515,171.8 C521,175 527,179 532.5,184 C538,188 544,194 548.3,201.5 C553,207 556,219 556,236 Z" fill="#a349a4" stroke="#a349a4" stroke-width="0.7"/>
    <path d="M394.9,238.1 L556,236 L558.7,329.8 Z" fill="#99d9ea" stroke="#99d9ea" stroke-width="0.7"/>
    <path d="M556,236 L621.3,233.1 L621.3,368 L558.7,329.8 Z" fill="#b5e61d" stroke="#b5e61d" stroke-width="0.7"/>
    <path d="M394.9,238.1 L621.3,366.5 L621.3,368 L392.8,368 Z" fill="#22b14c" stroke="#22b14c" stroke-width="0.7"/>
    <path d="M394.9,238.1 L392.8,368 L165,368 L165,366.8 Z" fill="#ffaec9" stroke="#ffaec9" stroke-width="0.7"/>
    <path d="M269.8,241.3 L394.9,238.1 L275.6,306.5 Z" fill="#c3c3c3" stroke="#c3c3c3" stroke-width="0.7"/>
    <path d="M165,244.4 L269.8,241.3 L275.6,306.5 L165,366.8 Z" fill="#00a2e8" stroke="#00a2e8" stroke-width="0.7"/>
    <g fill="none" stroke="#ed1c24" stroke-width="1.7" stroke-linecap="round" stroke-linejoin="round">
      <path d="M165,111 L394.9,238.1 L621.3,366.5"/>
      <path d="M165,366.8 L394.9,238.1 L621.3,111"/>
      <path d="M396.1,111 L394.9,238.1 L392.8,368"/>
      <path d="M165,244.4 L394.9,238.1 L621.3,233.1"/>
      <path d="M265.9,168.2 L269.8,241.3 L275.6,306.5"/>
      <path d="M396.1,111 L515,171.8 C521,175 527,179 532.5,184 C538,188 544,194 548.3,201.5 C553,207 556,219 556,236 L558.7,329.8"/>
      <path d="M305,189 C320,194 345,196 360,194.5 C380,191 390,170 399,140"/>
    </g>
  </g>
  <g id="ribbonicons">
    <!-- app icon -->
    <path d="M157,9 C156.6,6 159,4.2 161.4,4.4 C164,4.6 165,6.6 164.4,8.6 C163.8,10.6 162,12 160,11.9 C158.2,11.8 157.2,10.6 157,9 Z" fill="#3aa8d8"/>
    <path d="M158.6,10.8 L162,5.6 L163,6.3 L160,11.4 Z" fill="#0f4a8c"/>
    <!-- window controls -->
    <path d="M570,7.6 h5" stroke="#8a8a8a" stroke-width="0.6"/>
    <rect x="593.2" y="5" width="4.8" height="4.8" fill="none" stroke="#808080" stroke-width="0.6"/>
    <path d="M616.4,5 L621.2,9.8 M621.2,5 L616.4,9.8" stroke="#9a9a9a" stroke-width="0.55"/>
    <!-- share/settings icon -->
    <g fill="none" stroke="#555" stroke-width="0.7"><circle cx="622.3" cy="25.6" r="1.6"/><circle cx="619.3" cy="28.2" r="1.6"/><path d="M617.6,31.2 q1.8,-2 3.6,0"/></g>
    <!-- save -->
    <g fill="none" stroke="#4a4a4a" stroke-width="0.8" transform="translate(0,0.5)"><path d="M211.3,24.6 h5 l1.2,1.2 v5 h-6.2 Z"/><path d="M212.8,24.8 v2 h3 v-2"/><path d="M212.6,30.6 v-2.2 h3.6 v2.2"/></g>
    <!-- undo -->
    <path d="M233.6,24.4 v3.2 h3.2 M233.9,27.3 C235.6,25 238.6,24.4 239.6,26.4 C240.6,28.6 238,30.6 235.4,31.4" fill="none" stroke="#3c3c3c" stroke-width="0.85"/>
    <!-- redo (disabled) -->
    <path d="M260.6,24.4 v3.2 h-3.2 M260.3,27.3 C258.6,25 255.6,24.4 254.6,26.4 C253.6,28.6 256.2,30.6 258.8,31.4" fill="none" stroke="#d6d6d6" stroke-width="0.85"/>
    <!-- clipboard -->
    <rect x="165.4" y="52.8" width="5" height="9.6" rx="0.8" fill="none" stroke="#6b6b6b" stroke-width="0.8"/>
    <path d="M166.6,52.6 q2.4,-1.4 5,0" fill="none" stroke="#6b6b6b" stroke-width="0.7"/>
    <rect x="169.2" y="54.8" width="4.6" height="7.8" rx="0.8" fill="#e4eef8" stroke="#6a8fb8" stroke-width="0.8"/>
    <!-- select -->
    <rect x="198.6" y="52.2" width="10.8" height="10.2" fill="none" stroke="#555" stroke-width="0.9" stroke-dasharray="2 0.9"/>
    <!-- chevrons -->
    <g fill="none" stroke="#a9a9a9" stroke-width="0.6">
      <path d="M168.4,68.9 l1.2,1 l1.2,-1"/><path d="M203,68.9 l1.2,1 l1.2,-1"/><path d="M301.8,69.1 l1.2,1 l1.2,-1"/><path d="M334.4,69.1 l1.2,1 l1.2,-1"/><path d="M363.7,69.1 l1.2,1 l1.2,-1" stroke="#d5d5d5"/>
    </g>
    <!-- pencil -->
    <path d="M229,55.2 L229.5,53.2 L235.2,47.9 L236.8,49.6 L231,54.8 Z" fill="#dcb878" stroke="#6a5030" stroke-width="0.55"/>
    <!-- fill (selected) -->
    <rect x="244.5" y="43.9" width="16" height="15.4" rx="2" fill="#fbf3f1" stroke="#c48a80" stroke-width="0.8"/>
    <g transform="rotate(-38 251.8 51)">
      <path d="M248.9,49.4 v3.4 a2.9,1.5 0 0 0 5.8,0 v-3.4 Z" fill="#2f6496" stroke="#24507c" stroke-width="0.5"/>
      <ellipse cx="251.8" cy="49.4" rx="2.9" ry="1.5" fill="#d2e2ee" stroke="#2c5a88" stroke-width="0.6"/>
    </g>
    <path d="M255.4,52.8 q1.5,1.6 0.7,2.6 q-1.2,0.7 -1.7,-0.7 Z" fill="#5a2a3a"/>
    <!-- text A -->
    <path d="M268.9,55.4 L272.3,48.2 L275.7,55.4 M270.2,52.8 h4.2" fill="none" stroke="#4a4a4a" stroke-width="0.8"/>
    <!-- eraser -->
    <g transform="rotate(-40 233 71)"><rect x="229.4" y="68.9" width="7.2" height="4.3" rx="1" fill="#eeb0b8" stroke="#b86a74" stroke-width="0.6"/><rect x="229.4" y="68.9" width="2.8" height="4.3" rx="1" fill="#d0707c"/></g>
    <!-- picker -->
    <path d="M248.8,74.8 L249.2,72.8 L252.6,69.4 L254,70.8 L250.6,74.2 Z" fill="#9cc4e8" stroke="#2c5a88" stroke-width="0.6"/>
    <path d="M252,68.8 L254.6,71.4 M253.2,70 L255.2,67.6 a1,1 0 0 1 1.2,1.2 L254,70.8" fill="#1c4a80" stroke="#1c4a80" stroke-width="1"/>
    <!-- magnifier -->
    <rect x="269.2" y="68.6" width="4.6" height="4.2" fill="none" stroke="#5a5a5a" stroke-width="0.7"/>
    <path d="M271.5,68.6 v4.2 M269.2,70.7 h4.6 M273.6,72.6 L276.2,75.2" stroke="#5a5a5a" stroke-width="0.7" fill="none"/>
    <!-- brushes -->
    <path d="M300,51.6 l1.4,2 l1.6,-2 l1.6,2 l1.4,-2 v5.2 l-1.6,2.6 l-1.2,3.8 l-1.4,-3.8 l-1.8,-2.6 Z" fill="#bdbdbd" stroke="#4a4a4a" stroke-width="0.7"/>
    <path d="M301.4,58 l1.6,4.6 l1.6,-4.6 Z" fill="#3a3a3a"/>
    <!-- shapes -->
    <circle cx="334" cy="55.6" r="3.5" fill="none" stroke="#a8bccc" stroke-width="0.8"/>
    <rect x="334.4" y="56.2" width="6.2" height="6.2" rx="1" fill="#f9f9f9" stroke="#5a5a5a" stroke-width="0.8"/>
    <!-- size -->
    <g stroke="#c9c9c9" fill="none"><path d="M360,54 L371.4,56.4" stroke-width="0.6"/><path d="M360,56 L371.4,58.6" stroke-width="1"/><path d="M360,58.4 L371.4,61" stroke-width="1.5"/></g>
    <!-- color 1 / color 2 -->
    <circle cx="397.5" cy="51.8" r="6.9" fill="#fff" stroke="#3a7fc0" stroke-width="0.7"/>
    <circle cx="397.5" cy="51.8" r="5.6" fill="#00a2e8"/>
    <circle cx="397.5" cy="70.5" r="5.7" fill="#fff" stroke="#b8b8b8" stroke-width="0.6"/>
    <!-- palette -->
    <circle cx="419.3" cy="49.25" r="3.7" fill="#000000" stroke="#00000030" stroke-width="0.5"/>
    <circle cx="431.2" cy="49.25" r="3.7" fill="#7f7f7f" stroke="#00000030" stroke-width="0.5"/>
    <circle cx="443.0" cy="49.25" r="3.7" fill="#880015" stroke="#00000030" stroke-width="0.5"/>
    <circle cx="454.9" cy="49.25" r="3.7" fill="#ed1c24" stroke="#00000030" stroke-width="0.5"/>
    <circle cx="466.8" cy="49.25" r="3.7" fill="#ff7f27" stroke="#00000030" stroke-width="0.5"/>
    <circle cx="478.6" cy="49.25" r="3.7" fill="#fff200" stroke="#00000030" stroke-width="0.5"/>
    <circle cx="490.5" cy="49.25" r="3.7" fill="#22b14c" stroke="#00000030" stroke-width="0.5"/>
    <circle cx="502.4" cy="49.25" r="3.7" fill="#00a2e8" stroke="#00000030" stroke-width="0.5"/>
    <circle cx="514.3" cy="49.25" r="3.7" fill="#3f48cc" stroke="#00000030" stroke-width="0.5"/>
    <circle cx="526.1" cy="49.25" r="3.7" fill="#a349a4" stroke="#00000030" stroke-width="0.5"/>
    <circle cx="419.3" cy="60.95" r="3.7" fill="#ffffff" stroke="#8f8f8f" stroke-width="0.5"/>
    <circle cx="431.2" cy="60.95" r="3.7" fill="#c3c3c3" stroke="#00000038" stroke-width="0.5"/>
    <circle cx="443.0" cy="60.95" r="3.7" fill="#bcbab8" stroke="#00000038" stroke-width="0.5"/>
    <circle cx="454.9" cy="60.95" r="3.7" fill="#ffaec9" stroke="#00000038" stroke-width="0.5"/>
    <circle cx="466.8" cy="60.95" r="3.7" fill="#ffc90e" stroke="#00000038" stroke-width="0.5"/>
    <circle cx="478.6" cy="60.95" r="3.7" fill="#efe4b0" stroke="#00000038" stroke-width="0.5"/>
    <circle cx="490.5" cy="60.95" r="3.7" fill="#b5e61d" stroke="#00000038" stroke-width="0.5"/>
    <circle cx="502.4" cy="60.95" r="3.7" fill="#99d9ea" stroke="#00000038" stroke-width="0.5"/>
    <circle cx="514.3" cy="60.95" r="3.7" fill="#7092be" stroke="#00000038" stroke-width="0.5"/>
    <circle cx="526.1" cy="60.95" r="3.7" fill="#c8bfe7" stroke="#00000038" stroke-width="0.5"/>
    <circle cx="419.3" cy="73.1" r="3.6" fill="#fbfbfb" stroke="#b4b4b4" stroke-width="0.6"/>
    <circle cx="431.2" cy="73.1" r="3.6" fill="#fbfbfb" stroke="#b4b4b4" stroke-width="0.6"/>
    <circle cx="443.0" cy="73.1" r="3.6" fill="#fbfbfb" stroke="#b4b4b4" stroke-width="0.6"/>
    <circle cx="454.9" cy="73.1" r="3.6" fill="#fbfbfb" stroke="#b4b4b4" stroke-width="0.6"/>
    <circle cx="466.8" cy="73.1" r="3.6" fill="#fbfbfb" stroke="#b4b4b4" stroke-width="0.6"/>
    <circle cx="478.6" cy="73.1" r="3.6" fill="#fbfbfb" stroke="#b4b4b4" stroke-width="0.6"/>
    <circle cx="490.5" cy="73.1" r="3.6" fill="#fbfbfb" stroke="#b4b4b4" stroke-width="0.6"/>
    <circle cx="502.4" cy="73.1" r="3.6" fill="#fbfbfb" stroke="#b4b4b4" stroke-width="0.6"/>
    <circle cx="514.3" cy="73.1" r="3.6" fill="#fbfbfb" stroke="#b4b4b4" stroke-width="0.6"/>
    <circle cx="526.1" cy="73.1" r="3.6" fill="#fbfbfb" stroke="#b4b4b4" stroke-width="0.6"/>
    <!-- edit colors wheel -->
    <circle cx="547.7" cy="61.7" r="1.5" fill="#fff" opacity="0.9"/>
    <rect x="550.2" y="55" width="3.8" height="4" rx="0.6" fill="#f4f4f4" stroke="#8aa098" stroke-width="0.5"/>
  </g>
  <g id="statusicons" fill="none" stroke="#555" stroke-width="0.6">
    <path d="M158,393.4 l0,4.4 l1.2,-1 l1.8,0.2 Z" />
    <rect x="224.2" y="393.4" width="5.3" height="5.3" stroke-dasharray="1.3 0.7"/>
    <rect x="291.6" y="393.4" width="5" height="5.2"/>
    <path d="M528.3,396.1 h4.4" stroke="#8a8a8a" stroke-width="0.7"/>
    <path d="M612,396.1 h4.6 M614.3,393.8 v4.6" stroke="#555" stroke-width="0.7"/>
  </g>
  <path d="M540.3,396.1 h19.9" stroke="#c9432b" stroke-width="1.6" stroke-linecap="round"/>
  <path d="M571,396.1 h33.5" stroke="#8c8c8c" stroke-width="1.5" stroke-linecap="round"/>
  <circle cx="564.7" cy="396.1" r="2.5" fill="#c22a2a"/>
  <!-- scrollbars -->
  <rect x="625.3" y="104" width="2.4" height="264" rx="1.2" fill="#868686"/>
  <rect x="157" y="382.5" width="443" height="2.4" rx="1.2" fill="#7f7f7f"/>
</svg>

<div id="task">
  <div id="clock">8:27 PM<br>10/9/2021</div>
</div>
<svg id="tb" width="760" height="428" viewBox="0 0 760 428">
  <defs>
    <linearGradient id="winG" x1="0" y1="0" x2="0" y2="1"><stop offset="0" stop-color="#55c8ff"/><stop offset="1" stop-color="#1aa0ee"/></linearGradient>
    <linearGradient id="wdgG" x1="0" y1="0" x2="0" y2="1"><stop offset="0" stop-color="#3cb4f4"/><stop offset="1" stop-color="#0f7fd8"/></linearGradient>
    <linearGradient id="chatG" x1="0" y1="0" x2="0" y2="1"><stop offset="0" stop-color="#8a80e0"/><stop offset="1" stop-color="#5048b0"/></linearGradient>
    <linearGradient id="edgeT" x1="0" y1="0" x2="1" y2="1"><stop offset="0" stop-color="#35c1f1"/><stop offset="0.55" stop-color="#1b7fd6"/><stop offset="1" stop-color="#0c54b0"/></linearGradient>
    <linearGradient id="edgeT2" x1="0" y1="0" x2="1" y2="0.6"><stop offset="0" stop-color="#2fc2df"/><stop offset="1" stop-color="#4fd34a"/></linearGradient>
    <linearGradient id="paintT" x1="0" y1="0" x2="1" y2="1"><stop offset="0" stop-color="#5ad0e8"/><stop offset="1" stop-color="#1a78c8"/></linearGradient>
  </defs>
  <!-- start -->
  <g fill="url(#winG)">
    <rect x="266" y="410.8" width="5.2" height="5.2" rx="0.4"/><rect x="271.9" y="410.8" width="5.2" height="5.2" rx="0.4"/>
    <rect x="266" y="416.7" width="5.2" height="5.2" rx="0.4"/><rect x="271.9" y="416.7" width="5.2" height="5.2" rx="0.4"/>
  </g>
  <!-- search -->
  <circle cx="294.6" cy="415.4" r="3.7" fill="#4a4048" stroke="#f4f4f4" stroke-width="1.3"/>
  <path d="M291.8,418.3 L288.8,421.3" stroke="#f4f4f4" stroke-width="1.5" stroke-linecap="round"/>
  <!-- task view -->
  <rect x="309.3" y="414" width="9.2" height="7.3" rx="0.8" fill="#6e6a6e"/>
  <rect x="312" y="410.7" width="8.8" height="7.9" rx="0.8" fill="#f1f1f1"/>
  <!-- widgets -->
  <rect x="331.6" y="410.8" width="10.8" height="10" rx="1.2" fill="url(#wdgG)"/>
  <rect x="332" y="411.2" width="4.7" height="9.2" rx="0.6" fill="#fbfbfb"/>
  <!-- chat -->
  <circle cx="358.7" cy="415.8" r="5.2" fill="url(#chatG)"/>
  <rect x="355.6" y="413.6" width="4.4" height="4.4" rx="0.8" fill="#fff"/>
  <path d="M360.4,415 L362.2,413.9 L362.2,417.7 L360.4,416.6 Z" fill="#fff"/>
  <!-- explorer -->
  <path d="M374.3,412 q0,-1.3 1.2,-1.3 h3 l1.2,1.3 h5.4 q1.2,0 1.2,1.2 v7.4 q0,1.2 -1.2,1.2 h-9.6 q-1.2,0 -1.2,-1.2 Z" fill="#f8c02a"/>
  <path d="M375.6,418 h9.4 v3.8 h-9.4 Z" fill="#2f86d4"/>
  <path d="M374.3,414.2 h12 v3.8 h-12 Z" fill="#ffd24a"/>
  <!-- edge -->
  <g transform="translate(402,416.3) scale(0.5) translate(-19,-111.6)">
    <circle cx="19" cy="111.6" r="12" fill="url(#edgeT)"/>
    <path d="M7.2,109.5 A12,12 0 0 1 30.9,110 C31,114 28,117.5 23.5,117 C20,116.5 19.5,113 21,111 C22,109 20,107.2 17.5,107.2 C12,107.4 8,112 9.5,118.5 A12,12 0 0 1 7.2,109.5 Z" fill="url(#edgeT2)"/>
    <path d="M7.2,109.5 A12,12 0 0 1 24,100.8 C16,100 9,104 7.2,109.5 Z" fill="#3cc6ee"/>
    <path d="M17.5,107.2 C20,107.2 22,109 21,111 C19.5,113 20,116.5 23.5,117 C26,117.2 28.2,116.2 29.6,114.6 C27,120 22,123 17,122.5 C11,121 8.5,114 11,110.5 C12.5,108.3 15,107.2 17.5,107.2 Z" fill="#0f4fa3"/>
    <circle cx="19.6" cy="112" r="2" fill="#0c2a5c"/>
  </g>
  <!-- store -->
  <path d="M421.4,411.8 v-1 q0,-1.2 1.2,-1.2 h2.6 q1.2,0 1.2,1.2 v1" fill="none" stroke="#d8d8d8" stroke-width="0.7"/>
  <rect x="418" y="411.7" width="11.6" height="9.6" rx="1.2" fill="#f7f7f4"/>
  <rect x="422" y="414.4" width="1.6" height="1.6" fill="#e8583a"/><rect x="424" y="414.4" width="1.6" height="1.6" fill="#7ab83a"/>
  <rect x="422" y="416.4" width="1.6" height="1.6" fill="#2f8ad8"/><rect x="424" y="416.4" width="1.6" height="1.6" fill="#f2b82a"/>
  <!-- chrome -->
  <g transform="translate(445.2,416.2) scale(0.54) translate(-18.4,-62.8)">
    <circle cx="18.4" cy="62.8" r="10.8" fill="#ea4335"/>
    <path d="M18.4,62.8 L9.05,57.4 A10.8,10.8 0 0 0 18.4,73.6 L23.1,65.5 Z" fill="#34a853"/>
    <path d="M18.4,57.4 L27.75,57.4 A10.8,10.8 0 0 1 18.4,73.6 L23.1,65.5 Z" fill="#fbbc05"/>
    <circle cx="18.4" cy="62.8" r="5.4" fill="#fff"/>
    <circle cx="18.4" cy="62.8" r="4.2" fill="#4285f4"/>
  </g>
  <rect x="443.7" y="424.2" width="3" height="1" rx="0.5" fill="#9a9698"/>
  <!-- snipping (active) -->
  <rect x="457.5" y="405.6" width="19.5" height="20.6" rx="2" fill="#40282a"/>
  <rect x="461.2" y="409.8" width="9.2" height="9.7" rx="0.8" fill="#f4f2f4"/>
  <path d="M461.2,410.6 q0,-0.8 0.8,-0.8 h2.2 v9.7 h-2.2 q-0.8,0 -0.8,-0.8 Z" fill="#f2a48a"/>
  <rect x="464.2" y="411.6" width="4.6" height="5.6" fill="none" stroke="#4a6ea8" stroke-width="0.7"/>
  <path d="M469.6,414 L473,418 M469.6,418 L473,414" stroke="#3a6aa8" stroke-width="0.9"/>
  <rect x="463.5" y="423.7" width="7.8" height="1.6" rx="0.8" fill="#e8644c"/>
  <!-- paint -->
  <path d="M484,416.5 C484,412 487.5,409.6 491,409.8 C494.6,410 496,413 495.4,416 C494.8,419.4 492.4,421.8 489,421.8 C486,421.8 484,419.6 484,416.5 Z" fill="url(#paintT)"/>
  <path d="M486.6,420 L491.6,412 L493,413 L488.6,421 Z" fill="#0c3a80"/>
  <rect x="487.8" y="424.2" width="3" height="1" rx="0.5" fill="#9a9698"/>
  <!-- tray -->
  <path d="M661.7,416.4 L663.7,414.4 L665.7,416.4" fill="none" stroke="#e6e6e6" stroke-width="0.8"/>
  <path d="M672.6,417.6 a1.8,1.8 0 0 1 0.5,-3.5 a2.5,2.5 0 0 1 4.8,0.4 a1.6,1.6 0 0 1 0.5,3.1 Z" fill="#ececec"/>
  <path d="M685.2,413.6 a5.6,5.6 0 0 1 7.6,0 L689,418.4 Z" fill="#dcdcdc"/>
  <path d="M697.4,414.4 h1.4 l1.8,-1.6 v5.6 l-1.8,-1.6 h-1.4 Z" fill="none" stroke="#ececec" stroke-width="0.7"/>
  <path d="M702.2,414.4 L704.2,416.4 M704.2,414.4 L702.2,416.4" stroke="#ececec" stroke-width="0.7"/>
  <rect x="709.2" y="413" width="7.4" height="4.8" rx="1.2" fill="#f2f2f2"/>
  <rect x="716.8" y="414.5" width="0.9" height="1.8" fill="#f2f2f2"/>
</svg>

</body>
</html>
